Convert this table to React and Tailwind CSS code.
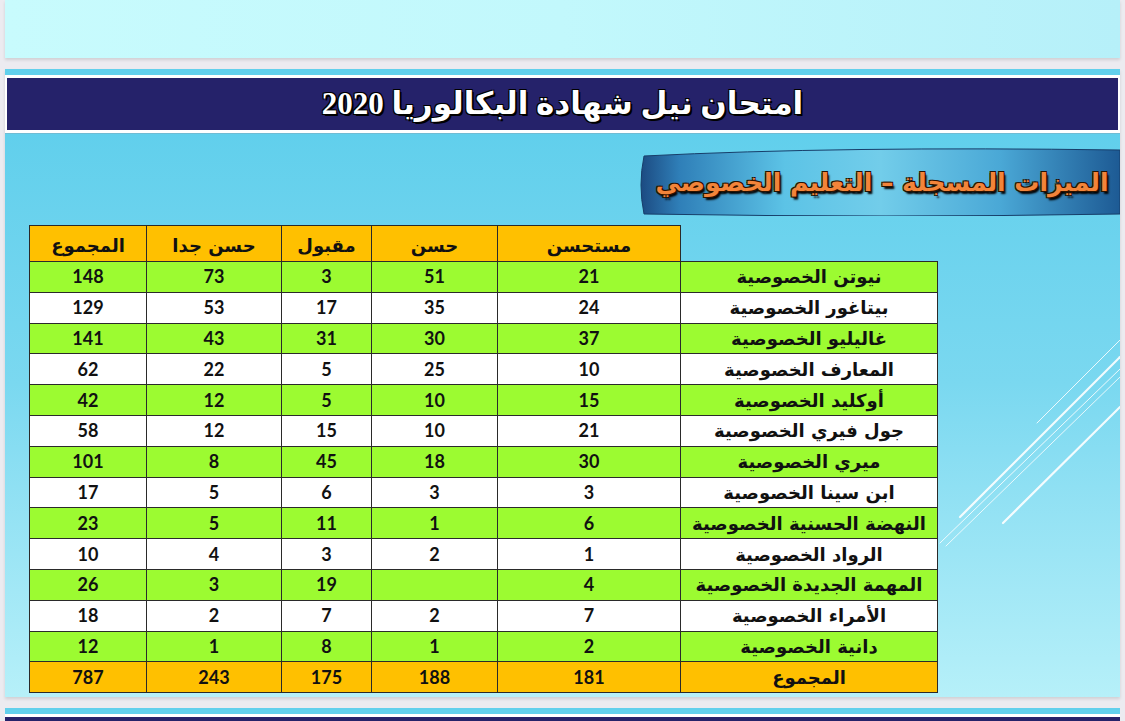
import React from "react";

const rows = [
  ["نيوتن الخصوصية", "21", "51", "3", "73", "148"],
  ["بيتاغور الخصوصية", "24", "35", "17", "53", "129"],
  ["غاليليو الخصوصية", "37", "30", "31", "43", "141"],
  ["المعارف الخصوصية", "10", "25", "5", "22", "62"],
  ["أوكليد الخصوصية", "15", "10", "5", "12", "42"],
  ["جول فيري الخصوصية", "21", "10", "15", "12", "58"],
  ["ميري الخصوصية", "30", "18", "45", "8", "101"],
  ["ابن سينا الخصوصية", "3", "3", "6", "5", "17"],
  ["النهضة الحسنية الخصوصية", "6", "1", "11", "5", "23"],
  ["الرواد الخصوصية", "1", "2", "3", "4", "10"],
  ["المهمة الجديدة الخصوصية", "4", "", "19", "3", "26"],
  ["الأمراء الخصوصية", "7", "2", "7", "2", "18"],
  ["دانية الخصوصية", "2", "1", "8", "1", "12"],
];
const total = ["المجموع", "181", "188", "175", "243", "787"];
const headers = ["مستحسن", "حسن", "مقبول", "حسن جدا", "المجموع"];

function Banner() {
  return (
    <div className="relative h-[68px] w-[480px]">
      <svg className="absolute inset-0" width="480" height="68" viewBox="0 0 480 68">
        <defs>
          <linearGradient id="rib" x1="0" x2="1" y1="0" y2="0">
            <stop offset="0" stopColor="#1c4b82" />
            <stop offset="0.08" stopColor="#2f7fb8" />
            <stop offset="0.3" stopColor="#5cc3e6" />
            <stop offset="0.5" stopColor="#72cdea" />
            <stop offset="0.75" stopColor="#4aa8d6" />
            <stop offset="1" stopColor="#1d5a94" />
          </linearGradient>
        </defs>
        <path
          d="M4 8 Q 200 -2 480 2 L 480 66 Q 250 70 4 66 Q -2 37 4 8 Z"
          fill="url(#rib)"
          stroke="#173e6a"
          strokeWidth="1"
        />
      </svg>
      <div
        dir="rtl"
        className="relative flex h-full items-center justify-center whitespace-nowrap pl-[4px] pt-[2px] text-[25px] font-bold text-[#f2843a] [font-family:'DejaVu_Sans',sans-serif] [text-shadow:1px_1px_0_#2a1200,-1px_-1px_0_#2a1200,1px_-1px_0_#2a1200,-1px_1px_0_#2a1200,2px_3px_2px_#000]"
      >
        الميزات المسجلة – التعليم الخصوصي
      </div>
    </div>
  );
}

export default function App() {
  return (
    <div className="h-[721px] overflow-hidden bg-[#ecebf0] px-[5px] [font-family:'Lato','DejaVu_Sans',sans-serif]">
      <div className="h-[58px] bg-linear-to-r from-[#c8fbfd] via-[#c2f8fc] to-[#b6f0f9] shadow-[0_2px_3px_rgba(0,0,0,0.12)]" />

      <div className="relative mt-[11px] flex h-[628px] flex-col bg-linear-to-b from-[#5acdeb] via-[#7ad8f0] to-[#b6f0f9] shadow-[0_2px_3px_rgba(0,0,0,0.12)]">
        <div className="h-[6px] bg-[#62d0ec]" />
        <div className="flex h-[58px] items-center justify-center border-x-2 border-y-[3px] border-white bg-[#25226a]">
          <span
            dir="rtl"
            className="text-[31px] font-bold text-white [font-family:'Liberation_Serif','DejaVu_Sans',serif] [text-shadow:2px_2px_0_#000,-1px_-1px_0_#000,1px_-1px_0_#000,-1px_1px_0_#000]"
          >
            امتحان نيل شهادة البكالوريا 2020
          </span>
        </div>
        <div className="h-px bg-[#6fbcd4]" />

        <svg
          className="pointer-events-none absolute left-0 top-0"
          width="1115"
          height="628"
          viewBox="0 0 1115 628"
        >
          <g stroke="#ffffff" strokeLinecap="round" fill="none">
            <line x1="955" y1="448" x2="1115" y2="288" strokeWidth="2.2" opacity="0.9" />
            <line x1="935" y1="474" x2="1115" y2="300" strokeWidth="1" opacity="0.85" />
            <line x1="941" y1="477" x2="1115" y2="308" strokeWidth="1" opacity="0.8" />
            <line x1="1032" y1="354" x2="1115" y2="271" strokeWidth="1" opacity="0.85" />
            <line x1="998" y1="454" x2="1115" y2="338" strokeWidth="2.2" opacity="0.9" />
          </g>
        </svg>

        <div className="mt-[14px] flex justify-end">
          <Banner />
        </div>

        <div className="ml-[24px] mt-[9px]">
          <table dir="rtl" className="w-[908px] table-fixed border-collapse text-center text-[#111]">
            <colgroup>
              <col className="w-[257px]" />
              <col className="w-[183px]" />
              <col className="w-[126px]" />
              <col className="w-[90px]" />
              <col className="w-[135px]" />
              <col className="w-[117px]" />
            </colgroup>
            <thead>
              <tr className="h-[36px]">
                <th className="border-0 p-0" />
                {headers.map((h) => (
                  <th
                    key={h}
                    className="border border-[#2a2a2a] bg-[#ffc000] p-0 pt-[4px] text-[18px] font-bold [font-family:'DejaVu_Sans',sans-serif]"
                  >
                    {h}
                  </th>
                ))}
              </tr>
            </thead>
            <tbody>
              {rows.map((r, i) => (
                <tr
                  key={r[0]}
                  className={`h-[30.8px] ${i % 2 === 0 ? "bg-[#9cfb31]" : "bg-white"}`}
                >
                  <td className="border border-[#2a2a2a] p-0 text-[18px] font-bold [font-family:'DejaVu_Sans',sans-serif]">
                    {r[0]}
                  </td>
                  {r.slice(1).map((v, j) => (
                    <td key={j} className="border border-[#2a2a2a] p-0 text-[18px] font-bold">
                      {v}
                    </td>
                  ))}
                </tr>
              ))}
              <tr className="h-[30.8px] bg-[#ffc000]">
                <td className="border border-[#2a2a2a] p-0 text-[18px] font-bold [font-family:'DejaVu_Sans',sans-serif]">
                  {total[0]}
                </td>
                {total.slice(1).map((v, j) => (
                  <td key={j} className="border border-[#2a2a2a] p-0 text-[18px] font-bold">
                    {v}
                  </td>
                ))}
              </tr>
            </tbody>
          </table>
        </div>
      </div>

      <div className="mt-[11px] flex h-[40px] flex-col">
        <div className="h-[6px] bg-[#62d0ec]" />
        <div className="h-[3px] bg-white" />
        <div className="flex-1 bg-[#25226a]" />
      </div>
    </div>
  );
}
